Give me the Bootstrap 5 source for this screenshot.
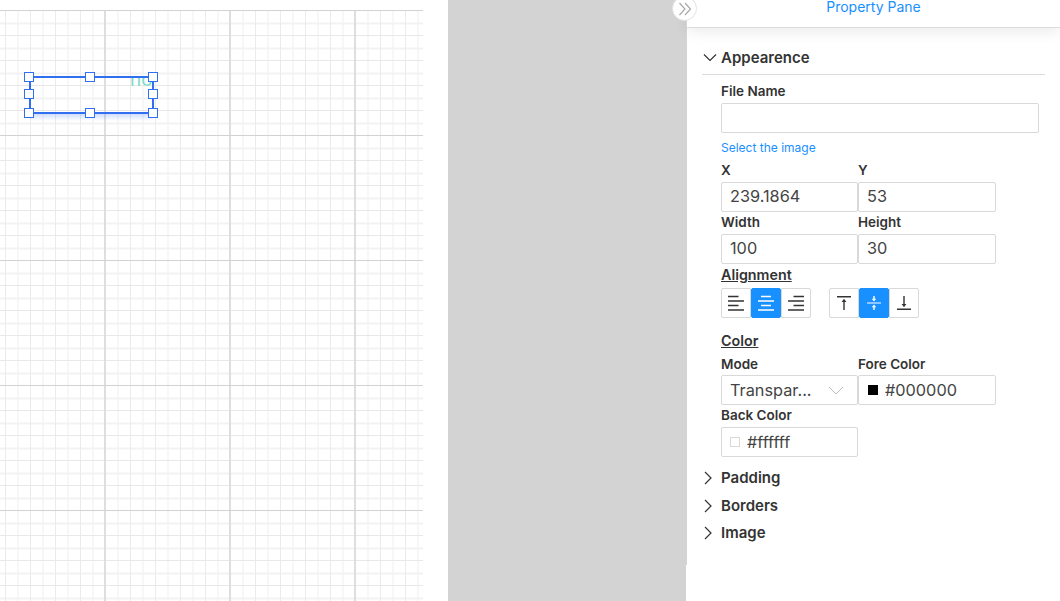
<!DOCTYPE html>
<html lang="en">
<head>
    <meta charset="UTF-8">
    <title>Property Pane</title>
    <link href="https://cdn.jsdelivr.net/npm/bootstrap@5.3.0/dist/css/bootstrap.min.css" rel="stylesheet">
    <style>
        html, body { height: 601px; overflow: hidden; }
        body { font-family: "Inter", "Liberation Sans", sans-serif; color: #333; background: #fff; }
        .page-wrap { height: 601px; }
        .canvas-col { width: 448px; padding: 10px 25px 0 0; }
        .grid-canvas {
            position: relative;
            height: 591px;
            background-color: #fff;
            background-image:
                linear-gradient(to bottom, #d2d2d2 1px, transparent 1px),
                linear-gradient(to right, #dedede 2px, transparent 2px),
                linear-gradient(to bottom, #e8e8e8 1px, transparent 1px),
                linear-gradient(to right, #ebebeb 1px, transparent 1px),
                linear-gradient(to bottom, #f2f2f2 2px, transparent 2px),
                linear-gradient(to right, #efefef 1px, transparent 1px);
            background-size: 100% 125px, 125px 100%, 100% 25px, 25px 100%, 100% 25px, 25px 100%;
            background-position: 0 0, 104px 0, 0 0, 5px 0, 0 12.5px, 17.5px 0;
        }
        .selection-svg { position: absolute; left: 20px; top: 57px; }
        .gap-col { width: 238px; background: #d3d3d3; }
        .pane { width: 374px; position: relative; }
        .pane::before { content: ""; position: absolute; left: 0; top: 0; width: 1px; height: 565px; background: #d3d3d3; }
        .pane-head { height: 28px; margin-left: 1px; border-bottom: 1px solid #ddd; box-shadow: 0 4px 14px rgba(0,0,0,.08); color: #1890ff; font-size: 14px; text-align: center; line-height: 14px; overflow: hidden; }
        .collapse-btn { position: absolute; left: -14px; top: -4px; width: 25px; height: 25px; border-radius: 50%; background: #fff; border: 1px solid #e2e2e2; display: flex; align-items: center; justify-content: center; }
        .pane-body { padding: 0 15px 0 16px; }
        .sec-title { font-size: 15px; font-weight: 600; color: #333; height: 20px; line-height: 20px; }
        .sec-title svg { width: 19px; flex: none; }
        .sec-open { margin-top: 20px; padding-bottom: 6px; border-bottom: 1px solid #ddd; box-sizing: content-box; }
        .fields { padding-left: 19px; }
        .lbl { font-size: 13.500px; font-weight: 600; line-height: 16px; color: #333; margin: 0; display: block; }
        .lbl-line { text-decoration: underline; font-size: 14.300px; }
        .fld { height: 30px; border: 1px solid #d9d9d9; border-radius: 2px; font-size: 16.300px; line-height: 26px; padding: 0 8px; color: #444; background: #fff; }
        .w-half { width: 137px; }
        .w-half2 { width: 138px; }
        .pad-fore { padding-left: 9px; }
        .pick-link { color: #1890ff; font-size: 12px; line-height: 16px; text-decoration: none; display: block; }
        .swatch { width: 10px; height: 10px; margin-right: 7px; flex: none; }
        .tool-btn { width: 30px; height: 30px; border: 1px solid #d9d9d9; background: #fff; display: flex; align-items: center; justify-content: center; padding: 0; }
        .tool-on { background: #1890ff; border-color: #1890ff; border-radius: 2px; }
        .tool-btn:first-child { border-radius: 2px 0 0 2px; }
        .tool-btn:last-child { border-radius: 0 2px 2px 0; }
    </style>
</head>
<body>
    <div class="d-flex page-wrap">
        <div class="canvas-col">
            <div class="grid-canvas">
                <svg class="selection-svg" width="145" height="70" viewBox="0 0 145 70">
                    <defs>
                        <linearGradient id="glow" x1="0" y1="0" x2="0" y2="1">
                            <stop offset="0" stop-color="#2f6ff0" stop-opacity=".22"/>
                            <stop offset="1" stop-color="#2f6ff0" stop-opacity="0"/>
                        </linearGradient>
                    </defs>
                    <rect x="10" y="47" width="123" height="7" fill="url(#glow)"/>
                    <svg x="10" y="10" width="123" height="36" viewBox="0 0 123 36">
                        <text x="100" y="9" font-size="19" fill="#7fdcc8" font-family="Inter">no</text>
                    </svg>
                    <rect x="10" y="10" width="123" height="36" fill="none" stroke="#2f6ff0" stroke-width="2"/>
                    <g fill="#fff" stroke="#2f6ff0">
                        <rect x="4.500" y="5.500" width="9" height="9"/>
                        <rect x="65.500" y="5.500" width="9" height="9"/>
                        <rect x="128.500" y="5.500" width="9" height="9"/>
                        <rect x="4.500" y="22.500" width="9" height="9"/>
                        <rect x="128.500" y="22.500" width="9" height="9"/>
                        <rect x="4.500" y="41.500" width="9" height="9"/>
                        <rect x="65.500" y="41.500" width="9" height="9"/>
                        <rect x="128.500" y="41.500" width="9" height="9"/>
                    </g>
                </svg>
            </div>
        </div>
        <div class="gap-col"></div>
        <div class="pane">
            <div class="pane-head">Property Pane</div>
            <div class="collapse-btn">
                <svg width="14" height="14" viewBox="0 0 14 14" fill="none" stroke="#a8a8a8" stroke-width="1.200"><path d="M1.500 1 L7 7 L1.500 13 M7 1 L12.500 7 L7 13"/></svg>
            </div>
            <div class="pane-body">
                <div class="sec-title sec-open d-flex align-items-center">
                    <svg height="12" viewBox="0 0 19 12" fill="none" stroke="#333" stroke-width="1.200"><path d="M2 2.500 L8 8.500 L14 2.500"/></svg>
                    Appearence
                </div>
                <div class="fields">
                    <label class="lbl" style="margin-top:8px">File Name</label>
                    <div class="fld mt-1" style="width:318px"></div>
                    <a class="pick-link" href="#" style="margin-top:7px">Select the image</a>
                    <div class="d-flex" style="margin-top:6px"><span class="lbl w-half">X</span><span class="lbl w-half2">Y</span></div>
                    <div class="d-flex" style="margin-top:4px"><div class="fld w-half">239.1864</div><div class="fld w-half2">53</div></div>
                    <div class="d-flex" style="margin-top:2px"><span class="lbl w-half">Width</span><span class="lbl w-half2">Height</span></div>
                    <div class="d-flex" style="margin-top:4px"><div class="fld w-half">100</div><div class="fld w-half2">30</div></div>
                    <span class="lbl lbl-line" style="margin-top:3px">Alignment</span>
                    <div class="d-flex" style="margin-top:5px;gap:18px">
                        <div class="d-flex">
                            <button class="tool-btn"><svg width="18" height="16" viewBox="0 0 18 16" stroke="#333" stroke-width="1.300"><path d="M1 1.500H11.500M1 6H17M1 10.500H11.500M1 15H17"/></svg></button>
                            <button class="tool-btn tool-on"><svg width="18" height="16" viewBox="0 0 18 16" stroke="#fff" stroke-width="1.300"><path d="M4 1.500H14M1 6H17M4 10.500H14M1 15H17"/></svg></button>
                            <button class="tool-btn"><svg width="18" height="16" viewBox="0 0 18 16" stroke="#333" stroke-width="1.300"><path d="M6.500 1.500H17M1 6H17M6.500 10.500H17M1 15H17"/></svg></button>
                        </div>
                        <div class="d-flex">
                            <button class="tool-btn"><svg width="16" height="16" viewBox="0 0 16 16" fill="#333" stroke="none"><path d="M1 1H15V2.400H1ZM7.300 15V7H5.600L8 3.800L10.400 7H8.700V15Z"/></svg></button>
                            <button class="tool-btn tool-on"><svg width="16" height="16" viewBox="0 0 16 16" fill="#fff" stroke="none"><path d="M1 7.400H15V8.600H1ZM7.300 1V3.800H5.800L8 6.400L10.200 3.800H8.700V1ZM7.300 15V12.200H5.800L8 9.600L10.200 12.200H8.700V15Z"/></svg></button>
                            <button class="tool-btn"><svg width="16" height="16" viewBox="0 0 16 16" fill="#333" stroke="none"><path d="M1 13.600H15V15H1ZM7.300 1V9H5.600L8 12.200L10.400 9H8.700V1Z"/></svg></button>
                        </div>
                    </div>
                    <span class="lbl lbl-line" style="margin-top:15px">Color</span>
                    <div class="d-flex" style="margin-top:7px"><span class="lbl w-half">Mode</span><span class="lbl w-half2">Fore Color</span></div>
                    <div class="d-flex" style="margin-top:3px">
                        <div class="fld w-half d-flex justify-content-between align-items-center">Transpar...
                            <svg width="16" height="9" viewBox="0 0 16 9" fill="none" stroke="#bbb" style="margin-right:5px"><path d="M1 1L8 8L15 1"/></svg>
                        </div>
                        <div class="fld w-half2 pad-fore d-flex align-items-center"><span class="swatch" style="background:#000"></span>#000000</div>
                    </div>
                    <span class="lbl" style="margin-top:2px">Back Color</span>
                    <div class="fld w-half d-flex align-items-center" style="margin-top:4px"><span class="swatch" style="background:#fff;border:1px solid #d9d9d9"></span>#ffffff</div>
                </div>
                <div class="sec-title d-flex align-items-center" style="margin-top:11px">
                    <svg height="14" viewBox="0 0 19 14" fill="none" stroke="#333" stroke-width="1.200"><path d="M3 1L9 7L3 13"/></svg>Padding
                </div>
                <div class="sec-title d-flex align-items-center" style="margin-top:8px">
                    <svg height="14" viewBox="0 0 19 14" fill="none" stroke="#333" stroke-width="1.200"><path d="M3 1L9 7L3 13"/></svg>Borders
                </div>
                <div class="sec-title d-flex align-items-center" style="margin-top:7px">
                    <svg height="14" viewBox="0 0 19 14" fill="none" stroke="#333" stroke-width="1.200"><path d="M3 1L9 7L3 13"/></svg>Image
                </div>
            </div>
        </div>
    </div>
    <script src="https://cdn.jsdelivr.net/npm/bootstrap@5.3.0/dist/js/bootstrap.bundle.min.js"></script>
</body>
</html>
